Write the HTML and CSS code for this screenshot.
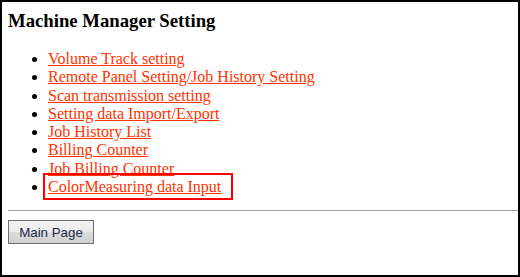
FILE: index.html
```html
<!DOCTYPE html>
<html lang="en">
<head>
  <meta charset="UTF-8">
  <title>Machine Manager Setting</title>
  <link rel="stylesheet" href="styles.css">
</head>
<body>
  <div class="frame">
    <h3>Machine Manager Setting</h3>

    <ul class="menu">
      <li><a href="#">Volume Track setting</a></li>
      <li><a href="#">Remote Panel Setting/Job History Setting</a></li>
      <li><a href="#">Scan transmission setting</a></li>
      <li><a href="#">Setting data Import/Export</a></li>
      <li><a href="#">Job History List</a></li>
      <li><a href="#">Billing Counter</a></li>
      <li><a href="#">Job Billing Counter</a></li>
      <li><span class="selected"><a href="#">ColorMeasuring data Input</a></span></li>
    </ul>

    <hr>

    <div class="actions">
      <button>Main Page</button>
    </div>
  </div>
</body>
</html>
```

FILE: styles.css
```css
body {
  margin: 0;
  font-family: 'Liberation Serif', 'Times New Roman', serif;
  color: #000;
  background-color: white;
}

.frame {
  box-sizing: border-box;
  width: 520px;
  height: 277px;
  border: 2px solid #000;
  padding: 0 0 0 6px;
  overflow: hidden;
}

h3 {
  font-size: 18.72px;
  font-weight: bold;
  margin: 8px 0 0;
  line-height: 22px;
}

.menu {
  margin: 18px 0 0;
  padding-left: 40px;
  font-size: 16px;
  line-height: 18.3px;
}

.menu a {
  color: #ff3300;
  text-decoration: underline;
}

.selected {
  border: 2px solid #ff0000;
  padding: 3px 10px 3px 3px;
  margin-left: -5px;
}

hr {
  margin: 14px 0 0;
  border: none;
  border-top: 1px solid #a0a0a0;
  height: 0;
}

.actions {
  margin-top: 9px;
}

button {
  font-family: 'Liberation Sans', Arial, sans-serif;
  font-size: 13.33px;
  color: #1c2a44;
  width: 86px;
  height: 24px;
  padding: 0;
  border: 1px solid #707070;
  border-radius: 0;
  background: linear-gradient(#f2f2f2, #ebebeb 50%, #dddddd 51%, #cfcfcf);
}
```
